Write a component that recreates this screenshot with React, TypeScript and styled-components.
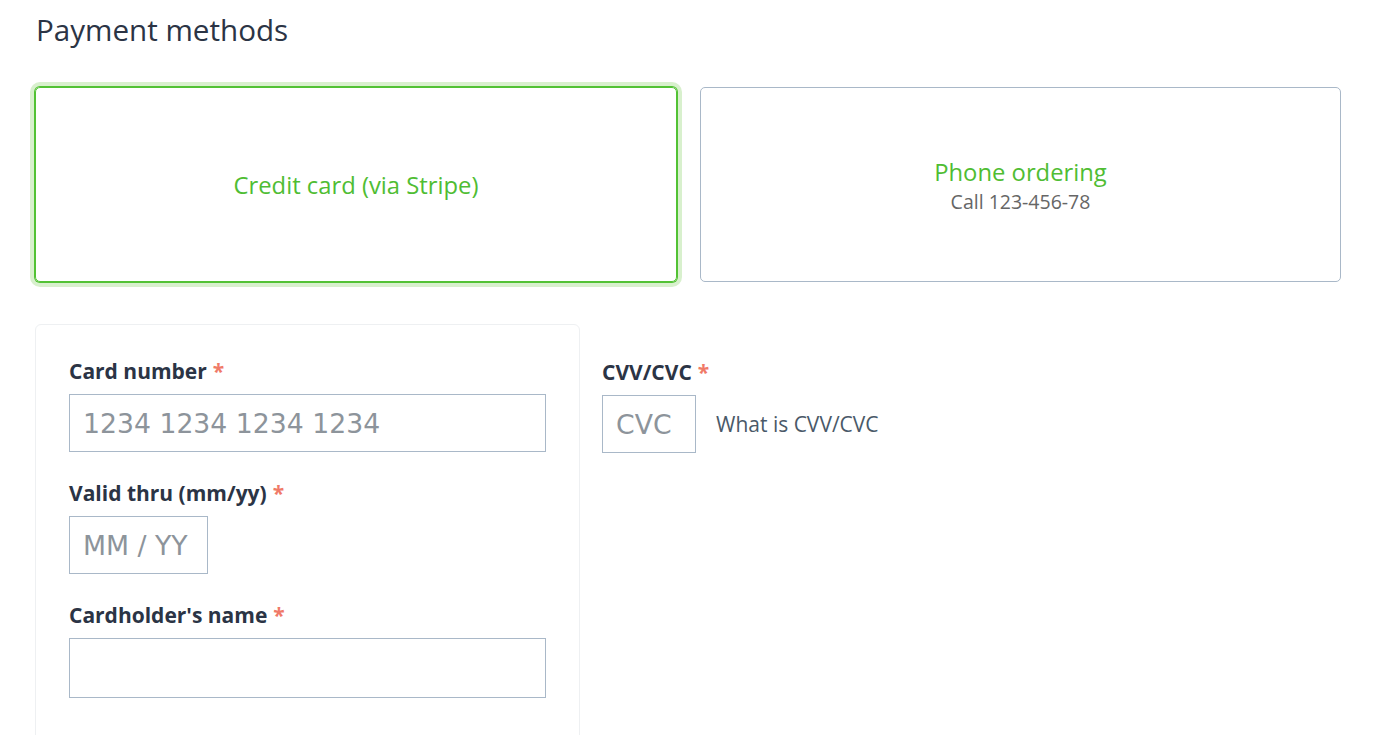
import React from "react";
import styled, { createGlobalStyle } from "styled-components";

const GlobalStyle = createGlobalStyle`
  body {
    margin: 0;
    background: #ffffff;
    font-family: "Open Sans", "Liberation Sans", sans-serif;
    color: #2b3445;
  }
`;

const Page = styled.div`
  padding: 10px 0 0 35px;
  width: 1306px;
`;

const Title = styled.h1`
  margin: 0 0 0 1px;
  font-size: 29.6px;
  line-height: 40px;
  font-weight: 400;
  color: #2b3445;
`;

const Methods = styled.div`
  display: grid;
  grid-template-columns: 642px 641px;
  gap: 23px;
  margin-top: 37px;
`;

const MethodCard = styled.div<{ $selected?: boolean }>`
  height: 195px;
  box-sizing: border-box;
  border: 1px solid ${(p) => (p.$selected ? "#52c234" : "#a9b8c8")};
  border-radius: 5px;
  box-shadow: ${(p) =>
    p.$selected ? "0 0 0 1px #52c234, 0 0 0 5px #d8f0cd" : "none"};
  display: flex;
  flex-direction: column;
  align-items: center;
  justify-content: center;
  text-align: center;
`;

const MethodName = styled.div`
  font-size: 23.8px;
  line-height: 30px;
  color: #4fbd33;
`;

const MethodNote = styled.div`
  font-size: 19.5px;
  line-height: 30px;
  margin-bottom: -5px;
  color: #666666;
`;

const FormRow = styled.div`
  display: flex;
  gap: 22px;
  margin-top: 42px;
`;

const Panel = styled.div`
  width: 545px;
  height: 420px;
  box-sizing: border-box;
  border: 1px solid #eef0f2;
  border-radius: 6px;
  padding: 33px 33px 0 33px;
`;

const SideColumn = styled.div`
  padding-top: 35px;
`;

const Field = styled.div`
  margin-bottom: 28px;
`;

const Label = styled.div`
  font-size: 21px;
  line-height: 26px;
  font-weight: 700;
  color: #2b3445;
  margin-bottom: 10px;
`;

const Required = styled.span`
  color: #f07a68;
  margin-left: 6px;
`;

const Input = styled.div<{ $width?: number; $height?: number }>`
  width: ${(p) => (p.$width ? `${p.$width}px` : "100%")};
  height: ${(p) => p.$height ?? 58}px;
  box-sizing: border-box;
  border: 1px solid #a9b8c8;
  padding: 0 13px;
  display: flex;
  align-items: center;
  font-family: "DejaVu Sans", sans-serif;
  font-size: 26.7px;
  color: #8d949b;
`;

const InlineRow = styled.div`
  display: flex;
  align-items: center;
  gap: 20px;
`;

const HelpLink = styled.span`
  font-size: 21px;
  color: #4a5968;
`;

export default function App() {
  return (
    <>
      <GlobalStyle />
      <Page>
        <Title>Payment methods</Title>
        <Methods>
          <MethodCard $selected>
            <MethodName>Credit card (via Stripe)</MethodName>
          </MethodCard>
          <MethodCard>
            <MethodName>Phone ordering</MethodName>
            <MethodNote>Call 123-456-78</MethodNote>
          </MethodCard>
        </Methods>
        <FormRow>
          <Panel>
            <Field>
              <Label>
                Card number<Required>*</Required>
              </Label>
              <Input>1234 1234 1234 1234</Input>
            </Field>
            <Field>
              <Label>
                Valid thru (mm/yy)<Required>*</Required>
              </Label>
              <Input $width={139}>MM / YY</Input>
            </Field>
            <Field>
              <Label>
                Cardholder's name<Required>*</Required>
              </Label>
              <Input $height={60} />
            </Field>
          </Panel>
          <SideColumn>
            <Label>
              CVV/CVC<Required>*</Required>
            </Label>
            <InlineRow>
              <Input $width={94}>CVC</Input>
              <HelpLink>What is CVV/CVC</HelpLink>
            </InlineRow>
          </SideColumn>
        </FormRow>
      </Page>
    </>
  );
}
